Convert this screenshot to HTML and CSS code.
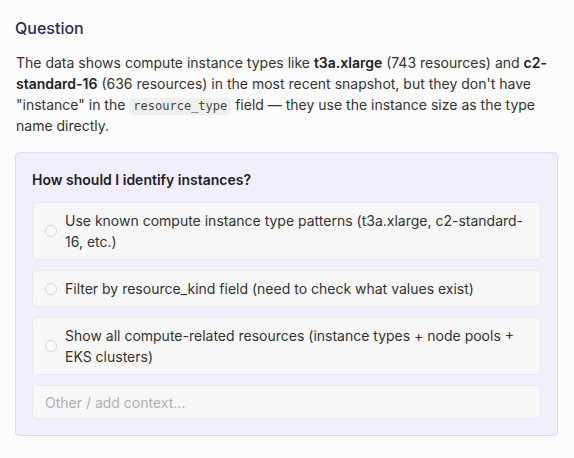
FILE: index.html
```html
<!DOCTYPE html>
<html lang="en">
<head>
    <meta charset="UTF-8">
    <meta name="viewport" content="width=device-width, initial-scale=1.0">
    <title>Question</title>
    <link rel="stylesheet" href="styles.css">
</head>
<body>

    <div class="question-panel">
        <!-- Heading and context -->
        <h2 class="question-title">Question</h2>
        <p class="question-text">The data shows compute instance types like <b>t3a.xlarge</b> (743 resources) and <b>c2-standard-16</b> (636 resources) in the most recent snapshot, but they don't have "instance" in the <code>resource_type</code> field — they use the instance size as the type name directly.</p>

        <!-- Choices -->
        <div class="choice-box">
            <div class="choice-prompt">How should I identify instances?</div>

            <div class="choices">
                <label class="choice">
                    <span class="radio"></span>
                    <span class="choice-label">Use known compute instance type patterns (t3a.xlarge, c2-standard-16, etc.)</span>
                </label>
                <label class="choice">
                    <span class="radio"></span>
                    <span class="choice-label">Filter by resource_kind field (need to check what values exist)</span>
                </label>
                <label class="choice">
                    <span class="radio"></span>
                    <span class="choice-label">Show all compute-related resources (instance types + node pools + EKS clusters)</span>
                </label>
                <input class="other-input" type="text" placeholder="Other / add context...">
            </div>
        </div>
    </div>

</body>
</html>
```

FILE: styles.css
```css
/* Base Reset */
* {
    margin: 0;
    padding: 0;
    box-sizing: border-box;
    font-family: 'Inter', 'Noto Sans', sans-serif;
}

body {
    background-color: #fcfcfc;
    color: #333333;
    font-size: 14px;
    line-height: 21px;
}

/* Panel */
.question-panel {
    padding: 18px 16px 20px 15px;
}

.question-title {
    font-size: 16px;
    font-weight: 500;
    line-height: 20px;
    color: #2d2a5e;
    margin-bottom: 14px;
}

.question-text {
    margin-bottom: 16px;
    padding-left: 1px;
}

.question-text b {
    font-weight: 600;
    color: #222;
}

.question-text code {
    font-family: 'DejaVu Sans Mono', monospace;
    font-size: 12px;
    line-height: 17px;
    display: inline-block;
    background-color: #efefef;
    color: #444;
    border-radius: 4px;
    padding: 0 4px;
}

/* Choice Box */
.choice-box {
    background-color: #f1eefd;
    border: 1px solid #ddd6fb;
    border-radius: 4px;
    padding: 16px;
}

.choice-prompt {
    font-weight: 600;
    color: #222;
    margin-bottom: 12px;
}

.choices {
    display: flex;
    flex-direction: column;
    gap: 10px;
}

.choice {
    display: flex;
    align-items: center;
    gap: 8px;
    background-color: #f7f7f7;
    border: 1px solid #e9e7ef;
    border-radius: 4px;
    padding: 7px 16px 7px 12px;
    color: #333;
    cursor: pointer;
}

.radio {
    flex: none;
    width: 12px;
    height: 12px;
    border-radius: 50%;
    border: 1px solid #d6d6da;
    background-color: #fafafa;
}

.other-input {
    height: 34px;
    background-color: #f7f7f7;
    border: 1px solid #e9e7ef;
    border-radius: 4px;
    padding: 0 12px;
    font-size: 14px;
    color: #333;
    outline: none;
}

.other-input::placeholder {
    color: #b0b0b4;
}
```
